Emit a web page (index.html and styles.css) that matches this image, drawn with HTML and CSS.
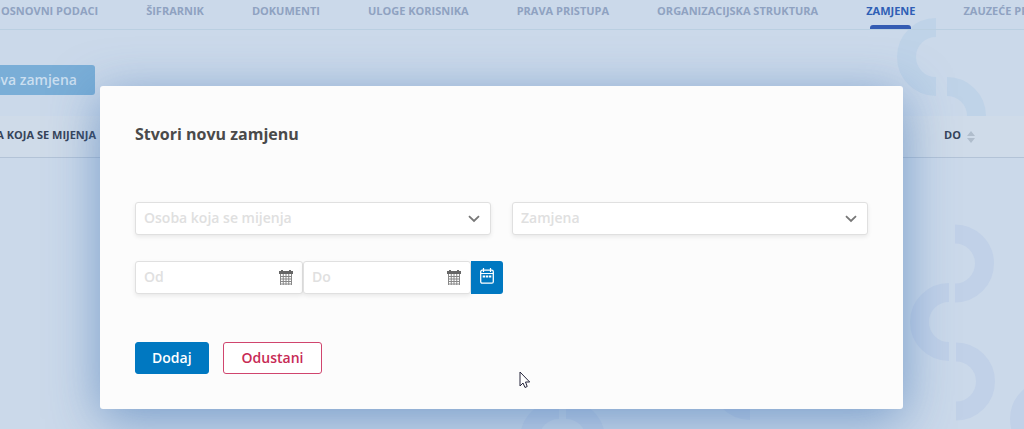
FILE: index.html
```html
<!DOCTYPE html>
<html lang="hr">
<head>
<meta charset="utf-8">
<meta name="viewport" content="width=device-width, initial-scale=1">
<title>Zamjene</title>
<link rel="stylesheet" href="styles.css">
</head>
<body>
<div class="page">
  <svg class="pattern" width="520" height="429" viewBox="504 0 520 429" fill="none" stroke-width="19" aria-hidden="true">
    <g stroke="#bfd3e8">
      <path d="M936 27.500a29.500 29.500 0 0 0 0 59"/>
      <path d="M947 86.500a29.500 29.500 0 0 1 0 59"/>
    </g>
    <g stroke="#c1d1e8">
      <path d="M955 234a29.500 29.500 0 0 1 0 59"/>
      <path d="M949 292.500a29.500 29.500 0 0 0 0 59"/>
      <path d="M956 352a29.500 29.500 0 0 1 0 59"/>
      <path d="M1049 389.500a29.500 29.500 0 0 0 0 59"/>
      <path d="M559 409.500a29.500 29.500 0 0 0 0 59"/>
      <path d="M566 409.500a29.500 29.500 0 0 1 0 59"/>
      <path d="M750 351.500a29.500 29.500 0 0 0 0 59"/>
    </g>
  </svg>
  <nav class="tabs">
    <a class="tab" href="#">OSNOVNI PODACI</a>
    <a class="tab" href="#">ŠIFRARNIK</a>
    <a class="tab" href="#">DOKUMENTI</a>
    <a class="tab" href="#">ULOGE KORISNIKA</a>
    <a class="tab" href="#">PRAVA PRISTUPA</a>
    <a class="tab" href="#">ORGANIZACIJSKA STRUKTURA</a>
    <a class="tab tab-active" href="#" aria-current="page">ZAMJENE</a>
    <a class="tab" href="#">ZAUZEĆE PROSTORA</a>
  </nav>
  <div class="toolbar">
    <button class="new-button" type="button">Nova zamjena</button>
  </div>
  <table class="grid">
    <thead>
      <tr>
        <th class="person" scope="col"><span class="person-label">OSOBA KOJA SE MIJENJA</span></th>
        <th class="until" scope="col">
          <span class="sortable">DO
            <svg width="8" height="12" viewBox="0 0 8 12" fill="#b0bdcc" aria-hidden="true"><path d="M4 0l4 5H0zM4 12L0 7h8z"/></svg>
          </span>
        </th>
      </tr>
    </thead>
  </table>
</div>

<div class="overlay">
  <form class="modal" role="dialog" aria-modal="true" aria-labelledby="modal-title">
    <h1 class="title" id="modal-title">Stvori novu zamjenu</h1>
    <div class="people">
      <div class="field">
        <select class="control" aria-label="Osoba koja se mijenja"><option>Osoba koja se mijenja</option></select>
        <svg class="chevron" width="12" height="8" viewBox="0 0 12 8" fill="none" stroke="#777" stroke-width="1.800" aria-hidden="true"><path d="M1 1.200l5 4.800 5-4.800"/></svg>
      </div>
      <div class="field">
        <select class="control" aria-label="Zamjena"><option>Zamjena</option></select>
        <svg class="chevron" width="12" height="8" viewBox="0 0 12 8" fill="none" stroke="#777" stroke-width="1.800" aria-hidden="true"><path d="M1 1.200l5 4.800 5-4.800"/></svg>
      </div>
    </div>
    <div class="dates">
      <div class="field date">
        <input class="control" type="text" placeholder="Od" aria-label="Od">
        <svg class="calendar" width="14" height="15" viewBox="0 0 14 15" aria-hidden="true"><path fill="#666" d="M0 1h2V0h2v1h6V0h2v1h2v3H0z"/><path fill="none" stroke="#888" d="M1.500 4v11M4.250 4v11M7 4v11M9.750 4v11M12.500 4v11M1 6.500h12M1 9h12M1 11.500h12M1 14h12"/></svg>
      </div>
      <div class="field date">
        <input class="control" type="text" placeholder="Do" aria-label="Do">
        <svg class="calendar" width="14" height="15" viewBox="0 0 14 15" aria-hidden="true"><path fill="#666" d="M0 1h2V0h2v1h6V0h2v1h2v3H0z"/><path fill="none" stroke="#888" d="M1.500 4v11M4.250 4v11M7 4v11M9.750 4v11M12.500 4v11M1 6.500h12M1 9h12M1 11.500h12M1 14h12"/></svg>
      </div>
      <button class="range-button" type="button" aria-label="Odaberi razdoblje">
        <svg width="14" height="16" viewBox="0 0 14 16" fill="none" stroke="#fff" aria-hidden="true"><rect x=".7" y="2.200" width="12.600" height="13" rx="1.500" stroke-width="1.300"/><path d="M1 5.500h12M3.500 0v4M10.500 0v4" stroke-width="1.200"/><path d="M2.700 8.500h2.400M5.800 8.500h2.400M8.900 8.500h2.400" stroke-width="2.200"/></svg>
      </button>
    </div>
    <div class="actions">
      <button class="button primary" type="button">Dodaj</button>
      <button class="button cancel" type="button">Odustani</button>
    </div>
  </form>
</div>

<svg class="cursor" width="12" height="18" viewBox="0 0 12 18" aria-hidden="true"><path d="M1 1v14l3-3 2 4.500 2.200-1L6.500 11h4.200z" fill="#fff" stroke="#26263c"/></svg>
</body>
</html>
```
FILE: styles.css
```css
* {
  box-sizing: border-box;
}

body {
  margin: 0;
  font-family: "Open Sans", "Noto Sans", sans-serif;
  background: #cbd9ea;
}

.page {
  position: relative;
  min-height: 100vh;
  overflow: hidden;
}

.pattern {
  position: absolute;
  top: 0;
  right: 0;
}

.tabs {
  position: relative;
  display: flex;
  gap: 48px;
  height: 30px;
  padding-left: 1px;
  border-bottom: 1px solid #bacfe1;
  white-space: nowrap;
}

.tab {
  flex: none;
  display: flex;
  flex-direction: column;
  justify-content: space-between;
  padding-top: 3px;
  font-size: 11px;
  line-height: 16px;
  font-weight: 700;
  color: #8fa2c1;
  text-decoration: none;
}

.tab-active {
  color: #2f5fb5;
}

.tab-active::after {
  content: "";
  height: 4px;
  margin: 0 4px;
  border-radius: 3px 3px 0 0;
  background: #345cb3;
}

.toolbar {
  position: relative;
  display: flex;
  padding-top: 35px;
}

.new-button {
  height: 30px;
  margin-left: -37px;
  padding: 0 18px;
  border: 0;
  border-radius: 3px;
  background: #7aaed7;
  color: #cbdff0;
  font: 600 14px/20px "Open Sans", sans-serif;
}

.grid {
  position: relative;
  width: 100%;
  margin-top: 21px;
  border-spacing: 0;
  background: #cfdbe9;
}

.grid th {
  height: 42px;
  padding: 0 0 3px;
  border-bottom: 1px solid #b3c3d7;
  font: 700 11px/16px "Open Sans", sans-serif;
  color: #36445a;
  text-align: left;
  white-space: nowrap;
}

.person-label {
  display: flex;
  justify-content: flex-end;
  width: 96px;
}

.until {
  width: 80px;
}

.sortable {
  display: flex;
  align-items: center;
  gap: 6px;
}

.sortable svg {
  margin-top: 3px;
}

.overlay {
  position: absolute;
  inset: 0;
  padding: 86px 121px 20px 100px;
}

.modal {
  padding: 35px;
  border-radius: 3px;
  background: #fcfcfc;
  box-shadow: 0 10px 50px rgba(50, 105, 175, 0.55);
}

.title {
  margin: 0;
  font-size: 16px;
  line-height: 26px;
  font-weight: 700;
  color: #4a4a4a;
}

.people {
  display: grid;
  grid-template-columns: 1fr 1fr;
  gap: 21px;
  margin-top: 55px;
}

.dates {
  display: flex;
  margin-top: 26px;
}

.field {
  display: flex;
  align-items: center;
  border: 1px solid #e0e0e0;
  border-radius: 3px;
  background: #fff;
  box-shadow: 0 2px 4px rgba(0, 0, 0, 0.08);
}

.date {
  width: 168px;
}

.control {
  flex: 1;
  min-width: 0;
  height: 31px;
  padding: 0 8px 2px;
  border: 0;
  outline: 0;
  appearance: none;
  background: transparent;
  font: 600 14px/20px "Open Sans", sans-serif;
  color: #e0e0e0;
}

.control::placeholder {
  color: #e0e0e0;
  opacity: 1;
}

.chevron {
  margin-right: 10px;
}

.calendar {
  margin-right: 9px;
}

.range-button {
  display: grid;
  justify-content: center;
  width: 32px;
  height: 33px;
  padding: 7px 0 0;
  align-content: start;
  border: 0;
  border-radius: 0 3px 3px 0;
  background: #0078c1;
}

.actions {
  display: flex;
  gap: 14px;
  margin-top: 48px;
}

.button {
  height: 32px;
  border: 1px solid #0078c1;
  border-radius: 3px;
  font: 600 14px/20px "Open Sans", sans-serif;
}

.primary {
  padding: 0 16px;
  background: #0078c1;
  color: #fff;
}

.cancel {
  padding: 0 18px;
  border-color: #d0456e;
  background: #fff;
  color: #c72a55;
}

.cursor {
  position: absolute;
  left: 519px;
  top: 371px;
}
```
